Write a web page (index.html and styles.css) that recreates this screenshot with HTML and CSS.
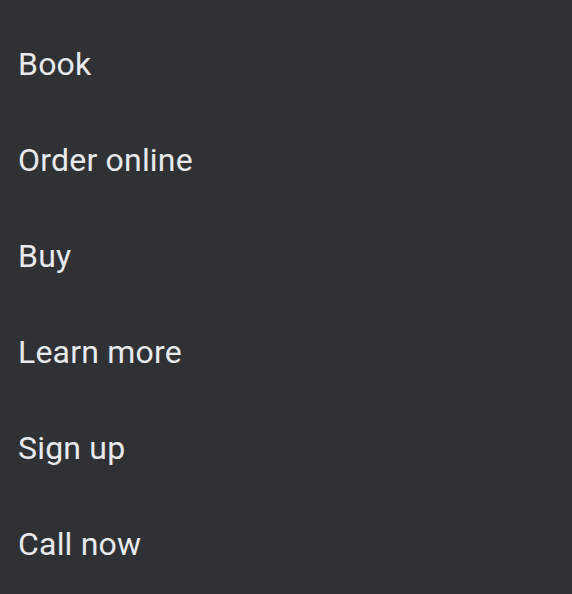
FILE: index.html
```html
<!DOCTYPE html>
<html>
  <head>
  <title>Actions</title>
  <link rel="stylesheet" href="styles.css">
  </head>
<body>

<ul class="menu">
  <li class="menu-item">Book</li>
  <li class="menu-item">Order online</li>
  <li class="menu-item">Buy</li>
  <li class="menu-item">Learn more</li>
  <li class="menu-item">Sign up</li>
  <li class="menu-item">Call now</li>
</ul>

</body>
</html>
```

FILE: styles.css
```css
html,
body {
 margin: 0;
 padding: 0;
 background-color: #303134;
}

.menu {
 list-style: none;
 margin: 0;
 padding: 16px 0 0 0;
 display: flex;
 flex-direction: column;
}

.menu-item {
 height: 96px;
 display: flex;
 align-items: center;
 padding: 0 18px;
 font-family: Roboto, "Noto Sans", sans-serif;
 font-size: 32px;
 letter-spacing: 0.2px;
 color: #e8eaed;
}
```
